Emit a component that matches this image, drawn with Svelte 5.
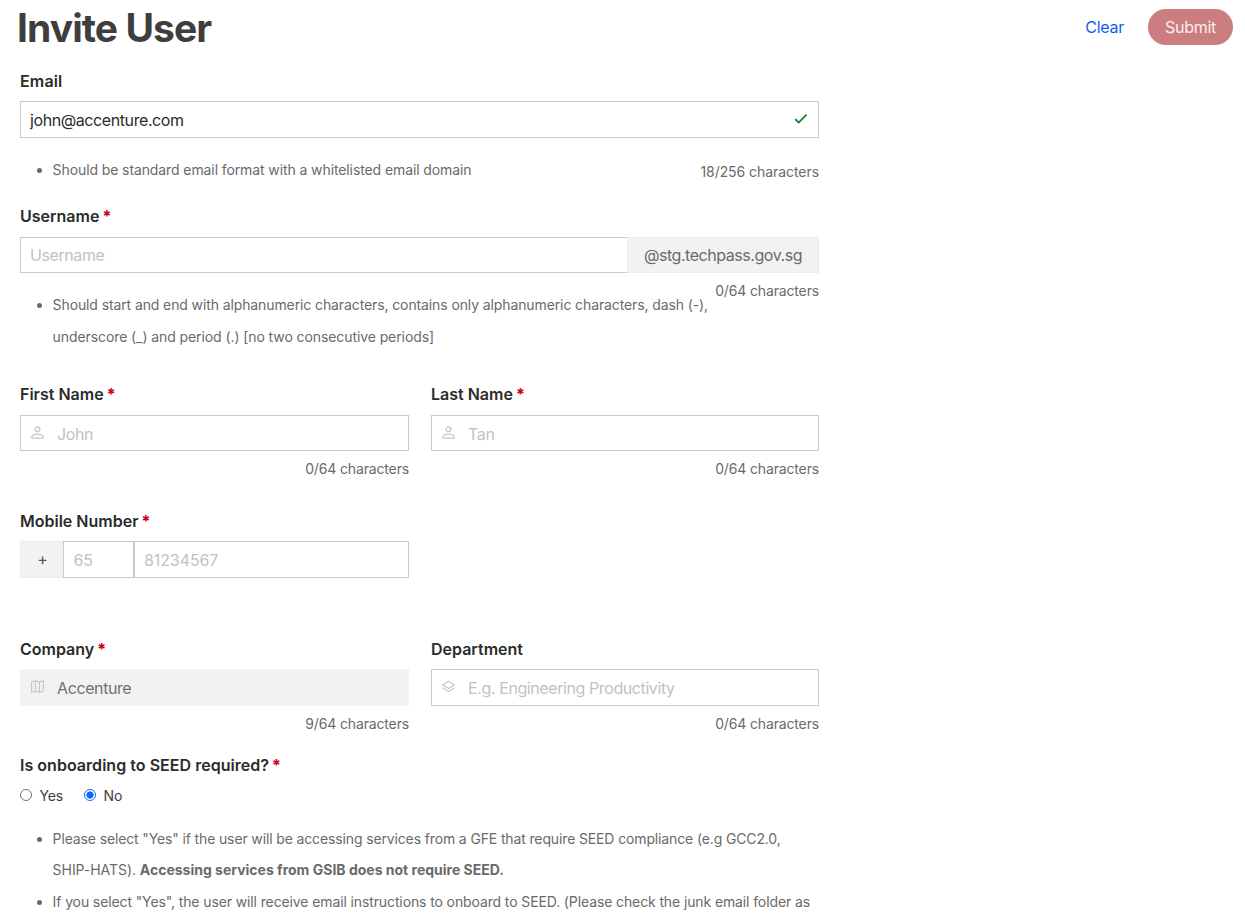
<script>
  let email = $state('john@accenture.com');
  let seed = $state('no');
</script>

{#snippet person()}
  <svg class="icon" viewBox="0 0 13 13" fill="none" stroke="currentColor" stroke-width="1.300">
    <circle cx="6.5" cy="3.3" r="2.4" />
    <path d="M.9 12.100v-.9c0-1.800 2.300-3 5.600-3s5.600 1.200 5.600 3v.9z" stroke-linejoin="round" />
  </svg>
{/snippet}

<header>
  <h1>Invite User</h1>
  <button class="clear">Clear</button>
  <button class="submit">Submit</button>
</header>

<main>
  <section class="email">
    <label for="email">Email</label>
    <div class="box tall">
      <input id="email" bind:value={email} />
      <svg class="check" viewBox="0 0 14 12" fill="none" stroke="#0a7a2a" stroke-width="1.7"><path d="M1.300 6.200 4.600 9.600 12.600 1.700" /></svg>
    </div>
    <div class="help">
      <ul><li>Should be standard email format with a whitelisted email domain</li></ul>
      <span class="count">18/256 characters</span>
    </div>
  </section>

  <section class="username">
    <label for="username">Username <b>*</b></label>
    <div class="group">
      <div class="box"><input id="username" placeholder="Username" /></div>
      <span class="suffix">@stg.techpass.gov.sg</span>
    </div>
    <div class="help">
      <ul>
        <li>Should start and end with alphanumeric characters, contains only alphanumeric characters, dash (-),<br /><span>underscore (_) and period (.) [no two consecutive periods]</span></li>
      </ul>
      <span class="count">0/64 characters</span>
    </div>
  </section>

  <section class="names cols">
    <div>
      <label for="first">First Name <b>*</b></label>
      <div class="box">{@render person()}<input id="first" placeholder="John" /></div>
      <span class="count">0/64 characters</span>
    </div>
    <div>
      <label for="last">Last Name <b>*</b></label>
      <div class="box">{@render person()}<input id="last" placeholder="Tan" /></div>
      <span class="count">0/64 characters</span>
    </div>
  </section>

  <section class="mobile cols">
    <div>
      <label for="mobile">Mobile Number <b>*</b></label>
      <div class="phone">
        <span class="plus">+</span>
        <div class="box tall code"><input placeholder="65" aria-label="Country code" /></div>
        <div class="box tall number"><input id="mobile" placeholder="81234567" /></div>
      </div>
    </div>
  </section>

  <section class="company cols">
    <div>
      <label for="company">Company <b>*</b></label>
      <div class="box tall disabled">
        <svg class="icon" viewBox="0 0 13 13" fill="none" stroke="currentColor" stroke-width="1.150" stroke-linejoin="round">
          <path d="M.6 1.700 4.500.9l4 1 3.900-1v10.400l-3.900 1-4-1-3.900 1zM4.500.9v10.400M8.500 1.900v10.400" />
        </svg>
        <input id="company" value="Accenture" disabled />
      </div>
      <span class="count">9/64 characters</span>
    </div>
    <div>
      <label for="department">Department</label>
      <div class="box tall">
        <svg class="icon" viewBox="0 0 13 13" fill="none" stroke="currentColor" stroke-width="1.150" stroke-linejoin="round">
          <path d="M6.500 1.300 12.100 4.900 6.500 8.500.9 4.900zM.4 7.700l6.100 3.900 6.100-3.900" />
        </svg>
        <input id="department" placeholder="E.g. Engineering Productivity" />
      </div>
      <span class="count">0/64 characters</span>
    </div>
  </section>

  <section class="seed">
    <div class="label">Is onboarding to SEED required? <b>*</b></div>
    <div class="radios">
      <label><input type="radio" name="seed" value="yes" bind:group={seed} />Yes</label>
      <label><input type="radio" name="seed" value="no" bind:group={seed} />No</label>
    </div>
    <ul>
      <li>Please select "Yes" if the user will be accessing services from a GFE that require SEED compliance (e.g GCC2.0,<br /><span>SHIP-HATS).</span> <strong>Accessing services from GSIB does not require SEED.</strong></li>
      <li class="wide">If you select "Yes", the user will receive email instructions to onboard to SEED. (Please check the junk email folder as</li>
    </ul>
  </section>
</main>

<style>
  :global(body) {
    margin: 0;
    background: #fff;
    overflow: hidden;
    font-family: Inter, "Liberation Sans", sans-serif;
  }
  :global(#app) {
    height: 922px;
    overflow: hidden;
  }
  header {
    display: flex;
    align-items: flex-start;
    height: 69px;
    padding: 0 12px 0 17px;
    box-sizing: border-box;
  }
  h1 {
    flex: 1;
    margin: 4px 0 0;
    font-size: 39px;
    line-height: 48px;
    font-weight: 700;
    letter-spacing: -0.93px;
    color: #3e3e3e;
  }
  button {
    height: 36px;
    margin-top: 9px;
    border: 0;
    font: 400 16px Inter, sans-serif;
    letter-spacing: -0.28px;
  }
  .clear {
    padding: 0;
    margin-right: 24px;
    background: none;
    color: #0d5ee8;
  }
  .submit {
    width: 85px;
    padding: 0;
    border-radius: 18px;
    background: #cc7d80;
    color: #faeeee;
  }
  main {
    width: 799px;
    margin-left: 20px;
  }
  .email { height: 135px; }
  .username { height: 178px; }
  .names { height: 127px; }
  .mobile { height: 128px; }
  .company { height: 116px; }
  .cols {
    display: grid;
    grid-template-columns: 389px 388px;
    column-gap: 22px;
  }
  section label, .label {
    display: block;
    height: 32px;
    font-size: 16px;
    line-height: 25px;
    font-weight: 600;
    letter-spacing: 0;
    color: #2b2b2b;
    white-space: nowrap;
  }
  .label { letter-spacing: 0.03px; }
  .email > label { letter-spacing: 0.15px; }
  .username > label, .names label { height: 33px; }
  b {
    margin-left: -1.2px;
    color: #d0021b;
    font-weight: 800;
  }
  .box {
    display: flex;
    align-items: center;
    flex: 1;
    min-width: 0;
    height: 36px;
    box-sizing: border-box;
    border: 1px solid #cacaca;
    padding: 0 9px;
  }
  .tall { height: 37px; }
  .box input {
    flex: 1;
    min-width: 0;
    padding: 1px 0 0;
    border: 0;
    outline: 0;
    background: none;
    font: 400 16px/24px Inter, sans-serif;
    letter-spacing: -0.41px;
    color: #2b2b2b;
  }
  .group .box input { padding: 0 0 1px; }
  .phone .box input { letter-spacing: -0.1px; }
  .phone .code input { padding-left: 0.5px; }
  .box input::placeholder { color: #c2c2c2; }
  .box .icon {
    flex: none;
    width: 13px;
    height: 13px;
    margin: 0 12.8px 2px 1.300px;
    color: #c6c6c6;
  }
  .disabled {
    background: #f2f2f2;
    border-color: #f2f2f2;
  }
  .box.disabled input { color: #707070; }
  .check {
    width: 14px;
    height: 12px;
    margin: 0 1px 2px 0;
  }
  .help {
    display: flex;
    justify-content: space-between;
  }
  ul {
    margin: 0;
    padding: 0;
    list-style: none;
    font-size: 14px;
    line-height: 31.5px;
    letter-spacing: -0.1px;
    color: #6a6a6a;
    white-space: nowrap;
  }
  .username ul { letter-spacing: -0.11px; }
  .username li span { letter-spacing: -0.09px; }
  .seed ul { letter-spacing: -0.135px; line-height: 31.4px; }
  .seed li span { letter-spacing: -0.05px; }
  .seed .wide { letter-spacing: -0.115px; }
  .seed strong { letter-spacing: 0; }
  li {
    padding-left: 32.6px;
    position: relative;
  }
  li::before {
    content: "";
    position: absolute;
    left: 17px;
    top: 14px;
    width: 5px;
    height: 5px;
    border-radius: 50%;
    background: #6a6a6a;
  }
  .email ul { margin-top: 16px; }
  .email .help .count { margin-top: 24px; letter-spacing: -0.06px; }
  .username ul { margin-top: 16px; }
  .username .help {
    display: grid;
    grid-template-columns: 690px 1fr;
  }
  .count {
    display: block;
    margin-top: 8px;
    font-size: 14px;
    line-height: 20px;
    letter-spacing: -0.15px;
    text-align: right;
    white-space: nowrap;
    color: #6a6a6a;
  }
  .group, .phone { display: flex; }
  .group .box { border-right: 0; }
  .suffix {
    flex: none;
    width: 192px;
    height: 36px;
    box-sizing: border-box;
    border: 1px solid #ececec;
    background: #f2f2f2;
    color: #6a6a6a;
    font-size: 16px;
    line-height: 35px;
    letter-spacing: -0.45px;
    text-align: center;
  }
  .plus {
    flex: none;
    width: 43px;
    height: 37px;
    box-sizing: border-box;
    padding-left: 1px;
    border: 1px solid #ececec;
    border-right: 0;
    background: #f2f2f2;
    color: #555;
    font-size: 16px;
    line-height: 35px;
    text-align: center;
  }
  .phone .code { flex: 0 0 71px; }
  .radios {
    display: flex;
    height: 38px;
    padding-top: 1px;
    box-sizing: border-box;
  }
  .radios label {
    display: flex;
    align-items: center;
    height: 20px;
    font-size: 14px;
    font-weight: 400;
    line-height: 20px;
    letter-spacing: -0.15px;
    margin-right: 21px;
    color: #3e3e3e;
  }
  .radios input {
    appearance: none;
    box-sizing: border-box;
    width: 12px;
    height: 12px;
    margin: 0 7.5px 2px 0;
    border: 1px solid #767676;
    border-radius: 50%;
  }
  .radios input:checked {
    border-color: #0d6efd;
    background: radial-gradient(circle, #0d66fd 3.3px, #fff 3.900px);
  }
</style>
